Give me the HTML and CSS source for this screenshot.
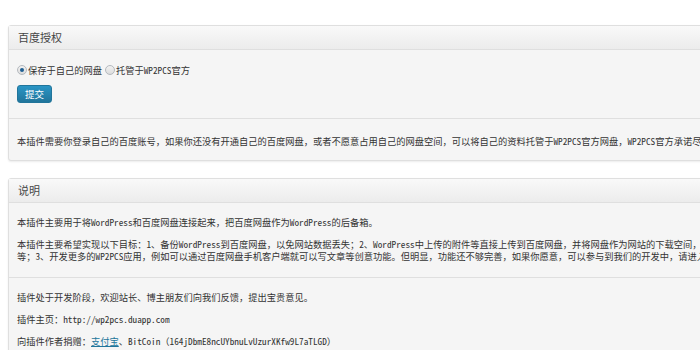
FILE: index.html
```html
<!DOCTYPE html>
<html lang="zh-CN">
<head>
<meta charset="utf-8">
<title>WP2PCS</title>
<link rel="stylesheet" href="styles.css">
</head>
<body>
<div class="wrap">
  <div class="panel">
    <div class="panel-head">百度授权</div>
    <div class="section sec-form">
      <div class="radios">
        <label class="radio"><input type="radio" name="mode" checked><span>保存于自己的网盘</span></label>
        <label class="radio"><input type="radio" name="mode"><span>托管于WP2PCS官方</span></label>
      </div>
      <button class="btn" type="button">提交</button>
    </div>
    <div class="section sec-note">
      <p>本插件需要你登录自己的百度账号，如果你还没有开通自己的百度网盘，或者不愿意占用自己的网盘空间，可以将自己的资料托管于WP2PCS官方网盘，WP2PCS官方承诺尽最大努力保护您的资料安全。</p>
    </div>
  </div>

  <div class="panel panel-2">
    <div class="panel-head">说明</div>
    <div class="section sec-info">
      <p>本插件主要用于将WordPress和百度网盘连接起来，把百度网盘作为WordPress的后备箱。</p>
      <p>本插件主要希望实现以下目标：1、备份WordPress到百度网盘，以免网站数据丢失；2、WordPress中上传的附件等直接上传到百度网盘，并将网盘作为网站的下载空间，实现直链下载、图片外链、音乐视频外链<br>等；3、开发更多的WP2PCS应用，例如可以通过百度网盘手机客户端就可以写文章等创意功能。但明显，功能还不够完善，如果你愿意，可以参与到我们的开发中，请进入下面的网站了解。</p>
    </div>
    <div class="section sec-info">
      <p>插件处于开发阶段，欢迎站长、博主朋友们向我们反馈，提出宝贵意见。</p>
      <p>插件主页：http://wp2pcs.duapp.com</p>
      <p>向插件作者捐赠：<a href="#" class="link">支付宝</a>、BitCoin（164jDbmE8ncUYbnuLvUzurXKfw9L7aTLGD）</p>
    </div>
  </div>
</div>
</body>
</html>
```

FILE: styles.css
```css
html, body {
  margin: 0;
  padding: 0;
  background: #ffffff;
  overflow: hidden;
}
body {
  font-family: "Noto Sans Mono CJK SC", "Noto Sans CJK SC", monospace;
  font-size: 9.25px;
  color: #333333;
}
.wrap {
  padding: 25px 0 0 8px;
  width: 1000px;
}
.panel {
  border: 1px solid #dfdfdf;
  border-radius: 3px;
  background: #f5f5f5;
  box-shadow: 0 1px 2px rgba(0, 0, 0, 0.08);
}
.panel-2 {
  margin-top: 17px;
}
.panel-head {
  height: 23px;
  line-height: 23px;
  padding-left: 9px;
  font-family: "Noto Sans CJK SC", sans-serif;
  font-size: 11px;
  color: #464646;
  background: linear-gradient(to bottom, #f9f9f9, #ececec);
  border-bottom: 1px solid #dfdfdf;
}
.section {
  padding: 0 8px;
}
.section + .section {
  border-top: 1px solid #dfdfdf;
}
.section p {
  margin: 0;
  line-height: 12px;
  white-space: nowrap;
}
.section p + p {
  margin-top: 10px;
}
.sec-form {
  padding-top: 14px;
  padding-bottom: 15px;
}
.radios {
  display: flex;
  align-items: center;
  gap: 3px;
  height: 12px;
  line-height: 12px;
}
.radio {
  display: flex;
  align-items: center;
  gap: 1px;
}
.radio input {
  -webkit-appearance: none;
  appearance: none;
  margin: 0;
  width: 10px;
  height: 10px;
  border: 1px solid #b4b9be;
  border-radius: 50%;
  background: linear-gradient(to bottom, #f2f2f2, #dcdcdc);
  box-sizing: border-box;
  position: relative;
}
.radio input:checked::after {
  content: "";
  position: absolute;
  left: 2px;
  top: 2px;
  width: 4px;
  height: 4px;
  border-radius: 50%;
  background: #1e5f93;
}
.btn {
  display: block;
  margin-top: 9px;
  width: 35px;
  height: 18px;
  padding: 0;
  border: 1px solid #21759b;
  border-radius: 3px;
  background: linear-gradient(to bottom, #2a95c5, #21759b);
  color: #ffffff;
  font-family: "Noto Sans CJK SC", sans-serif;
  font-size: 9.5px;
  line-height: 16px;
}
.sec-note {
  padding-top: 16px;
  padding-bottom: 13px;
}
.sec-info {
  padding-top: 13px;
  padding-bottom: 15px;
}
.link {
  color: #21759b;
  text-decoration: underline;
}
```
